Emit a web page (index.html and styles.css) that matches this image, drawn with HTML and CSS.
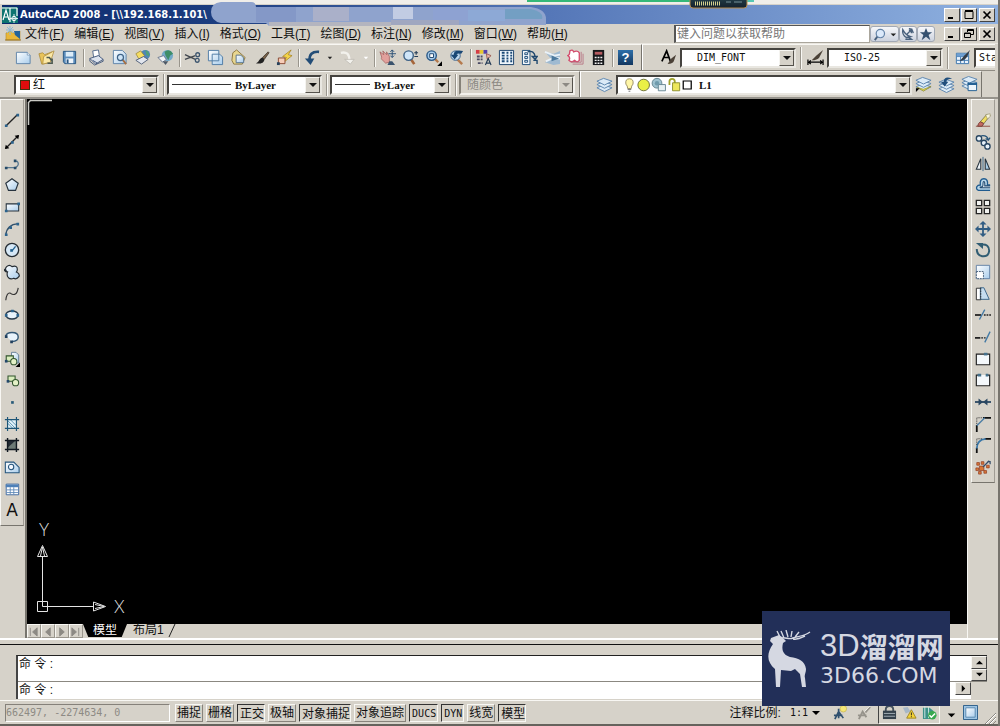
FILE: index.html
```html
<!DOCTYPE html>
<html lang="zh-CN">
<head>
<meta charset="utf-8">
<meta name="viewport" content="width=device-width, initial-scale=1">
<title>AutoCAD 2008</title>
<link rel="stylesheet" href="styles.css">
</head>
<body>
<svg class="defs" width="0" height="0" aria-hidden="true">
  <defs>
    <linearGradient id="sheet" x1="0" y1="0" x2="1" y2="1"><stop offset="0" stop-color="#fff"/><stop offset="1" stop-color="#a9cdec"/></linearGradient>
    <linearGradient id="chip" x1="0" y1="0" x2="0" y2="1"><stop offset="0" stop-color="#24404a"/><stop offset="1" stop-color="#14202c"/></linearGradient>
  </defs>
  <symbol id="min" viewBox="0 0 12 10"><path d="M2 8h5" stroke="#000" stroke-width="2"/></symbol>
  <symbol id="max" viewBox="0 0 12 10"><path d="M2 1.5h8v7H2z" fill="none" stroke="#000"/><path d="M2 1h8" stroke="#000" stroke-width="2"/></symbol>
  <symbol id="restore" viewBox="0 0 12 10"><path d="M4.500 3V.5h6v5H8M1.500 4h6v4.500h-6zM4 1.500h7M1 4.500h7" fill="none" stroke="#000"/></symbol>
  <symbol id="close" viewBox="0 0 12 10"><path d="M2.500 1.500l7 7m0-7l-7 7" stroke="#000" stroke-width="1.700"/></symbol>
  <symbol id="layers" viewBox="0 0 18 18"><g fill="#dcebf7" stroke="#5d86ae"><path d="M1 12.500l7-3 9 3-8 4z"/><path d="M1 9l7-3 9 3-8 4z"/><path d="M1 5.500l7-3 9 3-8 4z"/></g></symbol>
  <symbol id="brush" viewBox="0 0 18 18"><path d="M16 3l-6 6 2 2 5-7z" fill="#7a6248" stroke="#2d2823" stroke-width=".7"/><path d="M10 9c-4 1-3 5-7 6 4 1 9 0 9-4z" fill="#222"/></symbol>
  <symbol id="lens" viewBox="0 0 18 18"><path d="M9 10l4 6" stroke="#a5653a" stroke-width="2.800"/><circle cx="7" cy="7" r="5" fill="#cfe5f8" stroke="#3f6387" stroke-width="1.500"/></symbol>
</svg>

<div class="desktop-strip">
  <svg class="gadget" viewBox="0 0 230 9" aria-hidden="true">
    <path d="M0 0h163v2H0z" fill="#35b878"/><path d="M163 0h64v2h-64z" fill="#55c8b4"/>
    <rect x="163" y="-3" width="57" height="11" rx="3" fill="url(#chip)" stroke="#b58a4d"/>
    <path d="M168 3.500h26" stroke="#d4cf8e" stroke-width="4" stroke-dasharray="1 1"/>
    <path d="M199 2h5m3 0h8" stroke="#58717b" stroke-width="1.500"/>
  </svg>
</div>

<header class="titlebar">
  <svg class="app-icon" viewBox="0 0 16 16" aria-hidden="true"><path d="M0 0h16v16H0z" fill="#0e7470"/><path d="M1 13L4 3l3 10M2 10h4M8 15V1M0 1h15M15 1v8" stroke="#fff" stroke-width="1.200" fill="none"/><circle cx="12" cy="11.500" r="2.200" fill="none" stroke="#fff"/><path d="M12 7v9M8 11.500h8" stroke="#fff" stroke-width=".8"/></svg>
  <h1 class="title">AutoCAD 2008 - [\\192.168.1.101\</h1>
  <svg class="smudge" viewBox="0 0 338 26" aria-hidden="true">
    <path d="M2 11Q2 2 12 1h30q5 0 5 5h275q15 2 15 12v6H150v1H60l-3-3H12Q2 20 2 11z" fill="#8fa3cd"/>
    <path d="M47 6h40v15H47z" fill="#8498c7"/><path d="M104 6h36v14h-36z" fill="#aab0c9"/><path d="M184 6h20v12h-20z" fill="#c2cce3"/><path d="M224 8h35v12h-35z" fill="#8ea2d2"/><path d="M259 9h37v11h-37z" fill="#8da9d6"/><path d="M296 8h26q13 3 11 10h-37z" fill="#739fc3"/>
    <path d="M60 21h122v4H60z" fill="#b4b5bf"/><path d="M182 19h68v5h-68z" fill="#a0a7c0"/>
  </svg>
  <div class="window-buttons">
    <button class="win" aria-label="最小化"><svg><use href="#min"/></svg></button><button class="win" aria-label="最大化"><svg><use href="#max"/></svg></button><button class="win last" aria-label="关闭"><svg><use href="#close"/></svg></button>
  </div>
</header>

<nav class="menubar" aria-label="菜单">
  <svg class="doc-icon" viewBox="0 0 16 16" aria-hidden="true"><path d="M1 7l5-2 4 3 5-3v9H1z" fill="#e9b739" stroke="#b68a24" stroke-width=".6"/><path d="M9 5h6v8l-5-4z" fill="#23639a"/><path d="M5 0v9M1 4h8M2 1l6 6m0-6L2 7" stroke="#8fb9d6"/><path d="M0 14h16" stroke="#99762a"/></svg>
  <div class="menus">
    <button class="menu">文件(<u>F</u>)</button><button class="menu">编辑(<u>E</u>)</button><button class="menu">视图(<u>V</u>)</button><button class="menu">插入(<u>I</u>)</button><button class="menu">格式(<u>O</u>)</button><button class="menu">工具(<u>T</u>)</button><button class="menu">绘图(<u>D</u>)</button><button class="menu">标注(<u>N</u>)</button><button class="menu">修改(<u>M</u>)</button><button class="menu">窗口(<u>W</u>)</button><button class="menu">帮助(<u>H</u>)</button>
  </div>
  <div class="infocenter">
    <input class="search" type="text" placeholder="键入问题以获取帮助" aria-label="键入问题以获取帮助">
    <button class="info wide" aria-label="搜索"><svg viewBox="0 0 28 16"><path d="M6 10l-3 4" stroke="#48607c" stroke-width="2"/><circle cx="9" cy="7" r="4.500" fill="#dceafb" stroke="#6484a8" stroke-width="1.300"/><path d="M20 7h6l-3 3z" fill="#222"/></svg></button><button class="info" aria-label="通讯中心"><svg viewBox="0 0 16 16"><path d="M2 3q3 6 9 8l-5 1q-5-3-4-9zM7 8l6-6M9 2q4 0 5 5M9 4q3 0 3 3M8 11l4 3H5" fill="none" stroke="#49617d" stroke-width="1.500"/></svg></button><button class="info" aria-label="收藏夹"><svg viewBox="0 0 16 16"><path d="M8 1l2 5h5l-4 3 2 6-5-4-5 4 2-6-4-3h5z" fill="#35506f"/></svg></button>
  </div>
  <div class="window-buttons">
    <button class="win" aria-label="最小化文档"><svg><use href="#min"/></svg></button><button class="win" aria-label="还原文档"><svg><use href="#restore"/></svg></button><button class="win last" aria-label="关闭文档"><svg><use href="#close"/></svg></button>
  </div>
</nav>

<div class="toolrow first">
  <div class="toolbar standard" role="toolbar" aria-label="标准">
    <button class="tool" aria-label="新建"><svg viewBox="0 0 18 18"><path d="M1.500 3.500H13l3 3v9H1.500z" fill="url(#sheet)" stroke="#5e83a8"/><path d="M13 3.500v3h3" fill="#fff" stroke="#5e83a8" stroke-width=".7"/></svg></button>
    <button class="tool" aria-label="打开"><svg viewBox="0 0 18 18"><path d="M1 5l4-1 2 2 8-3-5 12-6 1z" fill="#e9c45a" stroke="#a88736" stroke-width=".8"/><path d="M6 8l11-6-4 12-8 2z" fill="#fbe8a6" stroke="#ad8c3c" stroke-width=".8"/><path d="M9 9h3l3 4m0-3v5h-5" fill="none" stroke="#4e5a50" stroke-width="1.600"/></svg></button>
    <button class="tool" aria-label="保存"><svg viewBox="0 0 18 18"><path d="M2.500 2.500h13v13H4l-1.500-2z" fill="#5b8dbc" stroke="#285681"/><path d="M5 3h8v5H5z" fill="#dcecf8"/><path d="M5 10h8v5H5z" fill="#eef4fa"/><path d="M6 11h2v4H6z" fill="#285681"/></svg></button>
    <i class="sep"></i>
    <button class="tool" aria-label="打印"><svg viewBox="0 0 18 18"><path d="M5 2l6-1 1 6-6 2z" fill="#fff" stroke="#546a8c"/><path d="M2 10l9-3 5 4-8 5z" fill="#dce3ee" stroke="#465a7d"/><path d="M2 10v3l5 4 9-4v-2M5 12l5 3" fill="none" stroke="#465a7d"/></svg></button>
    <button class="tool" aria-label="打印预览"><svg viewBox="0 0 18 18"><path d="M2.500 1.500H12l4 4v10H2.500z" fill="url(#sheet)" stroke="#5e83a8"/><path d="M12 11l4 5" stroke="#a66f43" stroke-width="2"/><circle cx="10" cy="9" r="3.200" fill="#cfe5f8" stroke="#3f6387" stroke-width="1.300"/></svg></button>
    <button class="tool" aria-label="发布"><svg viewBox="0 0 18 18"><circle cx="12" cy="6" r="5" fill="#4e86b6"/><path d="M12 1q5 2 4 7l-3-2z" fill="#50a17a"/><path d="M2 5l5-3 4 5-5 5z" fill="#f5dd63" stroke="#9c8635" stroke-width=".8"/><path d="M2 12l8-4 5 3-7 5z" fill="#e2e6ee" stroke="#53627a"/></svg></button>
    <button class="tool" aria-label="三维 DWF"><svg viewBox="0 0 18 18"><circle cx="11" cy="7" r="6" fill="#73a9c9"/><path d="M8 3q5-4 9 2l-3 2-2 5-3-5z" fill="#3e8e68"/><path d="M1 9l6-2 3 4-4 3z" fill="#f2f5f8" stroke="#65738a"/><path d="M6 13h6l-3 4z" fill="#4c5866"/></svg></button>
    <i class="sep"></i>
    <button class="tool" aria-label="剪切"><svg viewBox="0 0 18 18"><path d="M1 6l11 5M1 11l11-4" stroke="#41474e" stroke-width="1.400"/><circle cx="14.500" cy="6" r="2" fill="none" stroke="#3d566f" stroke-width="1.400"/><circle cx="14" cy="12" r="2" fill="none" stroke="#3d566f" stroke-width="1.400"/></svg></button>
    <button class="tool" aria-label="复制"><svg viewBox="0 0 18 18"><path d="M1.500 1.500h11v11h-11zM5.500 5.500h8l3 3v8h-11z" fill="url(#sheet)" stroke="#4f7ba5"/></svg></button>
    <button class="tool" aria-label="粘贴"><svg viewBox="0 0 18 18"><path d="M3 4l4-3 9 8-3 7H4l-2-4z" fill="#e8d690" stroke="#8d7840"/><path d="M6.500 6.500h5l3 3v5h-8z" fill="url(#sheet)" stroke="#56718d"/></svg></button>
    <button class="tool" aria-label="特性匹配"><svg><use href="#brush"/></svg></button>
    <button class="tool" aria-label="块编辑器"><svg viewBox="0 0 18 18"><path d="M16 1L7 8l4 1-4 6 10-8-4-1z" fill="#f4d448" stroke="#a57f20" stroke-width=".8"/><path d="M2.500 9.500h7v6h-7z" fill="#f6cdb8" stroke="#884832"/><path d="M1 14h3v3H1z" fill="#27425d"/></svg></button>
    <i class="sep"></i>
    <button class="tool" aria-label="放弃"><svg viewBox="0 0 18 18"><path d="M17 3Q6 2 7 13" fill="none" stroke="#234d77" stroke-width="2.800"/><path d="M2 10h10l-4 7z" fill="#234d77"/></svg></button>
    <button class="tool drop" aria-label="放弃列表"><svg viewBox="0 0 8 8"><path d="M2 3h5L4.500 6z" fill="#222"/></svg></button>
    <button class="tool" aria-label="重做" disabled><svg viewBox="0 0 18 18"><path d="M2 4q9-2 9 8" fill="none" stroke="#f2f1ec" stroke-width="2.500"/><path d="M6 11h10l-4 5z" fill="#f2f1ec" stroke="#b8b5ad" stroke-width=".7"/></svg></button>
    <button class="tool drop" aria-label="重做列表" disabled><svg viewBox="0 0 8 8"><path d="M2 3h5L4.500 6z" fill="#fff"/></svg></button>
    <i class="sep"></i>
    <button class="tool" aria-label="实时平移"><svg viewBox="0 0 18 18"><path d="M1 3l4 3-1-4 4 4V3l3 5v6l-4 1-5-5 1-1z" fill="#e1a09c" stroke="#9a5655" stroke-width=".7"/><path d="M14 1v8m-4-4h8M12 3l2-2 2 2m-4 4l2 2 2-2" fill="none" stroke="#284f75"/><path d="M9 17l2-4h3l3 4z" fill="#3b536d"/></svg></button>
    <button class="tool" aria-label="实时缩放"><svg viewBox="0 0 18 18"><use href="#lens" width="18" height="18"/><path d="M13 4h4m-2-2v4m-2 2h4" stroke="#243d58" stroke-width="1.200"/></svg></button>
    <button class="tool" aria-label="窗口缩放"><svg viewBox="0 0 18 18"><path d="M10 10l4 4" stroke="#b57a4d" stroke-width="2.500"/><circle cx="7" cy="7" r="5" fill="#a8cceb" stroke="#2b5a88" stroke-width="1.500"/><path d="M5 5h4v4H5z" fill="#fff" stroke="#1e456d"/><path d="M18 13v5h-5z"/></svg></button>
    <button class="tool" aria-label="缩放上一个"><svg viewBox="0 0 18 18"><path d="M10 11l5 5" stroke="#b57a4d" stroke-width="2.500"/><circle cx="8" cy="7" r="5" fill="#bfd8ed" stroke="#3a638d"/><path d="M16 2Q6 0 6 6H3l4 5 4-5H9q1-2 5-1z" fill="#194775"/></svg></button>
    <i class="sep"></i>
    <button class="tool" aria-label="特性"><svg viewBox="0 0 18 18"><path d="M1 1h4v4H1z" fill="#d43c46"/><path d="M5 1h4v4H5z" fill="#e7c72f"/><path d="M9 1h4v4H9z" fill="#5440ad"/><path d="M2 8h6M2 11h6M3 15h5" stroke="#4b4a63" stroke-width="2" stroke-dasharray="3 1"/><path d="M12 5l5 2-4 4z" fill="#e8b7a8" stroke="#9c5e53"/><path d="M11 17l3-7 3 7m-5-2h4" stroke="#223a56" fill="none" stroke-width="1.200"/></svg></button>
    <button class="tool" aria-label="设计中心"><svg viewBox="0 0 18 18"><path d="M1.500 1.500h15v15h-15z" fill="#eef5fb" stroke="#163f68"/><path d="M4 4h3m2 0h2m2 0h2M4 7h3m2 0h2m2 0h2M4 10h3m2 0h2m2 0h2M4 13h3m2 0h2m2 0h2" stroke="#1b4a77" stroke-width="2"/></svg></button>
    <button class="tool" aria-label="工具选项板"><svg viewBox="0 0 18 18"><path d="M1.500 1.500h8v15h-8z" fill="#f4f8fc" stroke="#1b4a77"/><path d="M4 4h3v2H4zm0 4h3v2H4zm0 4h3v2H4z" fill="none" stroke="#1b4a77"/><path d="M7 3q7-2 8 5m-3 0h5l-2 3zM13 12h4v4" fill="none" stroke="#20486e" stroke-width="1.500"/></svg></button>
    <button class="tool" aria-label="图纸集管理器"><svg viewBox="0 0 18 18"><path d="M1 3l9 2 7-3v14l-7 1-9-3 6-4z" fill="#9fbad1"/><path d="M1 3l10 4 6-1M2 13l9-4 6 1" stroke="#eaf2f8" stroke-width="2" fill="none"/><path d="M8 7l8 3-8 3" fill="#4b799e"/></svg></button>
    <button class="tool" aria-label="标记集管理器"><svg viewBox="0 0 18 18"><path d="M3 2q3-2 4 1 4-2 6 1v8q-2 3-5 0-3 3-6 0 2-3-1-5 2-1 2-5z" fill="#fff" stroke="#d34c6d" stroke-width="1.400"/><path d="M15 3v11H4M17 5v11H6" fill="none" stroke="#b87887"/></svg></button>
    <button class="tool" aria-label="快速计算器"><svg viewBox="0 0 18 18"><path d="M3 1h12v16H3z" fill="#16181b"/><path d="M5 3h8v3H5z" fill="#b65b60"/><path d="M5 9h2m1 0h2m1 0h2M5 12h2m1 0h2m1 0h2M5 15h2m1 0h2m1 0h2" stroke="#f2f2f2" stroke-width="1.500"/></svg></button>
    <i class="sep"></i>
    <button class="tool help" aria-label="帮助">?</button>
  </div>
  <div class="toolbar styles" role="toolbar" aria-label="样式">
    <button class="tool" aria-label="文字样式"><svg viewBox="0 0 18 18"><path d="M2 13L7 2l4 11M4 9h6" fill="none" stroke="#000" stroke-width="1.800"/><path d="M17 6l-5 4-4 6q6 0 7-4z" fill="#4b4137"/></svg></button>
    <div class="combo style-combo"><select class="mono indent" aria-label="文字样式"><option>DIM_FONT</option></select><span class="arrow"></span></div>
    <i class="sep tall"></i>
    <button class="tool" aria-label="标注样式"><svg viewBox="0 0 18 18"><path d="M1 11v6m16-6v6M2 14h14M4 12l-2 2 2 2m10-4l2 2-2 2" stroke="#000" fill="none" stroke-width="1.300"/><path d="M17 1l-7 6-5 5q6 0 8-3z" fill="#4b4137"/></svg></button>
    <div class="combo style-combo"><select class="mono indent" aria-label="标注样式"><option>ISO-25</option></select><span class="arrow"></span></div>
    <i class="sep tall"></i>
    <button class="tool" aria-label="表格样式"><svg viewBox="0 0 18 18"><path d="M2.500 4.500h13v11h-13zM3 8h12M3 12h12M7 5v10m4-10v10" fill="#eaf3fd" stroke="#3974ac"/><path d="M3 5h12v3H3z" fill="#6e9fd2"/><path d="M17 1l-6 6-5 6q6-1 8-5z" fill="#333c46"/></svg></button>
    <div class="combo table-combo"><select class="mono" aria-label="表格样式"><option>Standard</option></select><span class="arrow"></span></div>
  </div>
</div>

<div class="toolrow second">
  <div class="toolbar props" role="toolbar" aria-label="特性">
    <div class="combo color"><span class="red"></span><select aria-label="颜色"><option>红</option></select><span class="arrow"></span></div>
    <i class="sep tall"></i>
    <div class="combo linetype"><span class="line long"></span><select class="serif" aria-label="线型"><option>ByLayer</option></select><span class="arrow"></span></div>
    <i class="sep tall"></i>
    <div class="combo weight"><span class="line"></span><select class="serif" aria-label="线宽"><option>ByLayer</option></select><span class="arrow"></span></div>
    <i class="sep tall"></i>
    <div class="combo plot off"><select aria-label="打印样式" disabled><option>随颜色</option></select><span class="arrow"></span></div>
  </div>
  <div class="toolbar layer" role="toolbar" aria-label="图层">
    <button class="tool" aria-label="图层特性管理器"><svg><use href="#layers"/></svg></button>
    <div class="combo layer-combo">
      <svg class="states" viewBox="0 0 78 18" aria-hidden="true"><path d="M6 13q0-3-2-5-1-6 4-6t4 6q-2 2-2 5z" fill="#fff6a8" stroke="#92865b"/><path d="M6 14h4m-3 2h2" stroke="#666"/><circle cx="24" cy="9" r="6.500" fill="#eaf046" stroke="#63682f"/><circle cx="39" cy="7" r="5.500" fill="#9fc2cf" stroke="#60818d"/><path d="M40.500 8.500h8v7h-8z" fill="#e7f1f3" stroke="#60818d"/><circle cx="39" cy="7" r="2.500" fill="#709bac"/><path d="M53 9V5q0-3 3-3t3 3v4" fill="none" stroke="#a1a32c" stroke-width="2"/><path d="M56.500 6.500h8v9h-8z" fill="#eee75c" stroke="#858929"/><path d="M68.500 4.500h9v9h-9z" fill="#fff" stroke="#000" stroke-width="1.400"/></svg>
      <select class="serif" aria-label="图层"><option>L1</option></select><span class="arrow"></span>
    </div>
    <button class="tool" aria-label="置为当前图层"><svg viewBox="0 0 18 18"><use href="#layers" y="-1" width="18" height="18"/><path d="M2 12l7 2 8-3-8 5z" fill="#e6d94a" stroke="#9a912e" stroke-width=".7"/><path d="M1 17v-4h4z"/></svg></button>
    <button class="tool" aria-label="上一个图层"><svg viewBox="0 0 18 18"><use href="#layers" y="1" width="18" height="18"/><path d="M15 3Q7-1 6 6H3l4 5 4-5H9q0-3 6-3z" fill="#214f7d"/></svg></button>
    <button class="tool" aria-label="图层状态"><svg viewBox="0 0 18 18"><use href="#layers" y="-2" width="18" height="18"/><path d="M7.500 7.500h9v8h-9z" fill="#eef5fb" stroke="#1e5c91"/><path d="M7 8.500h10" stroke="#1e5c91" stroke-width="2"/></svg></button>
  </div>
</div>

<main class="workspace">
  <div class="side left">
    <div class="sidebar" role="toolbar" aria-label="绘图">
      <button class="side-tool" aria-label="直线"><svg viewBox="0 0 18 18"><path d="M3 15L15 3" stroke="#222" stroke-width="1.500"/><path d="M1 14h3v3H1zM14 2h3v3h-3z" fill="#2b638d"/></svg></button>
      <button class="side-tool" aria-label="构造线"><svg viewBox="0 0 18 18"><path d="M2 16L16 2" stroke="#222" stroke-width="1.500"/><path d="M1 17l1-5 4 4zM17 1l-5 1 4 4z"/><path d="M8 8h3v3H8z" fill="#2b638d"/></svg></button>
      <button class="side-tool" aria-label="多段线"><svg viewBox="0 0 18 18"><path d="M2 13h11q5-3 2-7h-3" fill="none" stroke="#597991" stroke-width="1.500"/><path d="M1 12h3v3H1zm10 0h3v3h-3zm0-8h3v3h-3z" fill="#244a68"/></svg></button>
      <button class="side-tool" aria-label="正多边形"><svg viewBox="0 0 18 18"><path d="M9 2l7 5-3 8H5L2 7z" fill="url(#sheet)" stroke="#26333e" stroke-width="1.300"/></svg></button>
      <button class="side-tool" aria-label="矩形"><svg viewBox="0 0 18 18"><path d="M2.500 5.500h14v8h-14z" fill="url(#sheet)" stroke="#26333e" stroke-width="1.200"/><path d="M1 12h3v3H1zM15 4h3v3h-3z" fill="#2b638d"/></svg></button>
      <button class="side-tool" aria-label="圆弧"><svg viewBox="0 0 18 18"><path d="M2 16Q3 4 16 3" fill="none" stroke="#31516c" stroke-width="1.500"/><path d="M1 14h3v3H1zM6 6h3v3H6zm8-4h3v3h-3z" fill="#2b638d"/></svg></button>
      <button class="side-tool" aria-label="圆"><svg viewBox="0 0 18 18"><circle cx="9" cy="9" r="7.500" fill="#d6e8f6" stroke="#242c33" stroke-width="1.500"/><path d="M9 10l4-5" stroke="#23618e" stroke-width="1.500"/><path d="M7 8h3v3H7z" fill="#23618e"/></svg></button>
      <button class="side-tool" aria-label="修订云线"><svg viewBox="0 0 18 18"><path d="M4 9Q0 6 3 3q3-3 6 0 6-2 6 3 0 2-1 3 4 2 3 5-3 4-6 2-5 2-7-2-1-3 0-5-3 0-4-3z" fill="url(#sheet)" stroke="#242c33" stroke-width="1.300"/></svg></button>
      <button class="side-tool" aria-label="样条曲线"><svg viewBox="0 0 18 18"><path d="M2 16Q3 7 7 8q7 5 9-6" fill="none" stroke="#333" stroke-width="1.300"/></svg></button>
      <button class="side-tool" aria-label="椭圆"><svg viewBox="0 0 18 18"><ellipse cx="9" cy="9" rx="7" ry="4.500" fill="#e8f3fb" stroke="#26394a" stroke-width="1.500"/><path d="M1 8h3v3H1zm7-5h3v3H8zm6 5h3v3h-3z" fill="#2b638d"/></svg></button>
      <button class="side-tool" aria-label="椭圆弧"><svg viewBox="0 0 18 18"><path d="M2 8q1-4 7-4 7 0 7 5t-7 5" fill="#e8f3fb" stroke="#345875" stroke-width="1.600"/><path d="M1 7h3v3H1zm6 6h3v3H7z" fill="#203f5d"/></svg></button>
      <button class="side-tool" aria-label="插入块"><svg viewBox="0 0 18 18"><path d="M8.500 1.500h5l3 3v9h-8z" fill="url(#sheet)" stroke="#5b7891"/><path d="M2.500 5.500h8v6h-8z" fill="#d9edbd" stroke="#31542d" stroke-width="1.200"/><circle cx="11" cy="12" r="3.500" fill="#e4f1c7" stroke="#31542d" stroke-width="1.200"/><path d="M1 10h3v3H1z" fill="#23486a"/><path d="M18 13v5h-5z"/></svg></button>
      <button class="side-tool" aria-label="创建块"><svg viewBox="0 0 18 18"><path d="M4.500 4.500h8v6h-8z" fill="#d9edbd" stroke="#31542d" stroke-width="1.200"/><circle cx="13" cy="12" r="3.500" fill="#e4f1c7" stroke="#31542d" stroke-width="1.200"/><path d="M3 9h3v3H3z" fill="#23486a"/></svg></button>
      <button class="side-tool" aria-label="点"><svg viewBox="0 0 18 18"><path d="M8 8h3v3H8z" fill="#275a78"/></svg></button>
      <button class="side-tool" aria-label="图案填充"><svg viewBox="0 0 18 18"><path d="M4 4h10v10H4z" fill="#e5f3fa"/><path d="M4 8l6 6M4 5l9 9M7 4l7 7" stroke="#4d8cad"/><path d="M1 4h16M1 14h16M4 1v16M14 1v16" stroke="#1d5577" stroke-width="1.300"/></svg></button>
      <button class="side-tool" aria-label="渐变色"><svg viewBox="0 0 18 18"><path d="M4 4h10v10H4z" fill="#6c7a75"/><path d="M4 4h9L4 12z" fill="#232b34"/><path d="M1 4h16M1 14h16M4 1v16M14 1v16" stroke="#101820" stroke-width="1.600"/></svg></button>
      <button class="side-tool" aria-label="面域"><svg viewBox="0 0 18 18"><path d="M1.500 3.500H11l6 6v6H1.500z" fill="url(#sheet)" stroke="#25557d" stroke-width="1.200"/><circle cx="8" cy="9" r="3" fill="#f4f9ff" stroke="#25557d" stroke-width="1.200"/></svg></button>
      <button class="side-tool" aria-label="表格"><svg viewBox="0 0 18 18"><path d="M2.500 3.500h14v12h-14z" fill="#fff" stroke="#315f9b"/><path d="M2 4h14v3H2z" fill="#4d80b8"/><path d="M3 10h13M3 13h13M7 7v8m4-8v8" stroke="#5c88b8"/></svg></button>
      <button class="side-tool letter" aria-label="多行文字">A</button>
    </div>
  </div>

  <div class="drawing">
    <div class="canvas">
      <svg class="corner" viewBox="0 0 26 27" aria-hidden="true"><path d="M3 1.500h22M1.500 4v22M1 4l3-3" stroke="#c9c9c4" stroke-width="1.500" fill="none"/></svg>
      <svg class="ucs" viewBox="0 0 95 96" aria-label="UCS 坐标"><g fill="none" stroke="#e4e4e4"><path d="M2.500 78.500h10v10h-10zM7.500 83.500V34M7.500 83.500H58M2.500 33.500h10l-5-11zM5.500 33l2-9 2 9M58.500 79v9l12-4.500zM60 81.500l9 2-9 2"/></g><text class="axis" x="4" y="13">Y</text><text class="axis" x="79" y="90">X</text></svg>
    </div>
    <div class="tabs">
      <button class="nav" aria-label="第一个"><svg viewBox="0 0 12 12"><path d="M2.500 2v9M10 2v9L5 6.500z"/></svg></button><button class="nav" aria-label="上一个"><svg viewBox="0 0 12 12"><path d="M9 2v9L4 6.500z"/></svg></button><button class="nav" aria-label="下一个"><svg viewBox="0 0 12 12"><path d="M4 2v9l5-4.500z"/></svg></button><button class="nav" aria-label="最后一个"><svg viewBox="0 0 12 12"><path d="M2 2v9l5-4.500zM9.500 2v9"/></svg></button>
      <button class="tab active">模型</button><button class="tab">布局1</button><svg class="slash" viewBox="0 0 8 13" aria-hidden="true"><path d="M7 0L1 13" stroke="#222"/></svg>
    </div>
  </div>

  <div class="side right">
    <div class="sidebar" role="toolbar" aria-label="修改">
      <button class="side-tool" aria-label="删除"><svg viewBox="0 0 18 18"><path d="M1 16h16" stroke="#8b4336"/><path d="M6 11l7-8 4 1-7 9z" fill="#f0de62" stroke="#665f37" stroke-width=".8"/><path d="M12 3l5-1v3l-3 3z" fill="#f8f5dd" stroke="#888459" stroke-width=".6"/><path d="M6 11l4 2-2 3H3l1-3z" fill="#c46a60" stroke="#743f39"/></svg></button>
      <button class="side-tool" aria-label="复制对象"><svg viewBox="0 0 18 18"><circle cx="4.500" cy="5" r="3" fill="#e8f2fa" stroke="#294661" stroke-width="1.500"/><circle cx="10" cy="10" r="3" fill="#e8f2fa" stroke="#294661" stroke-width="1.500"/><circle cx="14" cy="14" r="3" fill="#e8f2fa" stroke="#294661" stroke-width="1.500"/><path d="M7 2q7-1 8 5M12 5l3 2 2-3" fill="none" stroke="#28557a" stroke-width="1.400"/></svg></button>
      <button class="side-tool" aria-label="镜像"><svg viewBox="0 0 18 18"><path d="M6.500 3v12h-5z" fill="#eef4f8" stroke="#26333e" stroke-width="1.200"/><path d="M11.500 3v12h5z" fill="#a9cce5" stroke="#26333e" stroke-width="1.200"/><path d="M9 1v16" stroke="#2b5b81"/></svg></button>
      <button class="side-tool" aria-label="偏移"><svg viewBox="0 0 18 18"><path d="M17 15H4q-3-1-2-4 1-2 4-2-1-7 4-7t4 7h3" fill="#b9d7ea" stroke="#205b8e" stroke-width="1.500"/><path d="M17 12H6q-1-1 2-1 1 0 1-3t1-3 1 3v2h6" fill="#eef4f8" stroke="#224a70" stroke-width="1.200"/></svg></button>
      <button class="side-tool" aria-label="阵列"><svg viewBox="0 0 18 18"><path d="M1.500 1.500h6v6h-6zM10.500 1.500h6v6h-6zM1.500 10.500h6v6h-6zM10.500 10.500h6v6h-6z" fill="#f1f2ef" stroke="#262626" stroke-width="1.500"/></svg></button>
      <button class="side-tool" aria-label="移动"><svg viewBox="0 0 18 18"><path d="M9 3v12M3 9h12" stroke="#315d83" stroke-width="2"/><path d="M9 0l4 4H5zM9 18l4-4H5zM0 9l4-4v8zM18 9l-4-4v8z" fill="#315d83"/></svg></button>
      <button class="side-tool" aria-label="旋转"><svg viewBox="0 0 18 18"><path d="M7 3q9-1 9 7-1 7-8 6-6-1-6-8" fill="none" stroke="#315d73" stroke-width="2.200"/><path d="M1 1h8v7z" fill="#315d73"/></svg></button>
      <button class="side-tool" aria-label="缩放"><svg viewBox="0 0 18 18"><path d="M1.500 1.500h15v15h-15z" fill="url(#sheet)" stroke="#5b7ca3"/><path d="M1.500 8.500h8v8h-8z" fill="#fff" stroke="#37516d" stroke-dasharray="2 1"/></svg></button>
      <button class="side-tool" aria-label="拉伸"><svg viewBox="0 0 18 18"><path d="M1.500 2.500h5v13h-5z" fill="#fff" stroke="#222"/><path d="M6 2h4l6 13H6z" fill="#c6ddef" stroke="#315d83"/><path d="M6.500 2v13" stroke="#222" stroke-dasharray="2 1"/></svg></button>
      <button class="side-tool" aria-label="修剪"><svg viewBox="0 0 18 18"><path d="M0 9h7" stroke="#222" stroke-width="2"/><path d="M10 9h8" stroke="#222" stroke-width="1.500" stroke-dasharray="2 1"/><path d="M5 14l6-11" stroke="#4279a5" stroke-width="1.500"/></svg></button>
      <button class="side-tool" aria-label="延伸"><svg viewBox="0 0 18 18"><path d="M0 10h6" stroke="#222" stroke-width="2"/><path d="M7 10h6" stroke="#222" stroke-width="1.500" stroke-dasharray="2 1"/><path d="M11 15l6-12" stroke="#4279a5" stroke-width="1.500"/></svg></button>
      <button class="side-tool" aria-label="打断于点"><svg viewBox="0 0 18 18"><path d="M1.500 3.500h15v12h-15z" fill="#f4f8fb" stroke="#222" stroke-width="1.300"/><path d="M10 2h4v3h-4z" fill="#45718c"/></svg></button>
      <button class="side-tool" aria-label="打断"><svg viewBox="0 0 18 18"><path d="M4 3.500H1.500v12h15v-12H14" fill="#f4f8fb" stroke="#222" stroke-width="1.300"/><path d="M3 2h4v3H3zm9 0h3v3h-3z" fill="#45718c"/></svg></button>
      <button class="side-tool" aria-label="合并"><svg viewBox="0 0 18 18"><path d="M0 9h18" stroke="#294661" stroke-width="2"/><path d="M4 5l5 4-5 4zM14 5L9 9l5 4z" fill="#294661"/></svg></button>
      <button class="side-tool" aria-label="倒角"><svg viewBox="0 0 18 18"><path d="M2 18v-8M9 2h9" stroke="#111" stroke-width="2"/><path d="M2 11l9-9" stroke="#4b7da4" stroke-width="1.500"/><path d="M2 9V2h7" fill="none" stroke="#222" stroke-dasharray="1 1"/></svg></button>
      <button class="side-tool" aria-label="圆角"><svg viewBox="0 0 18 18"><path d="M2 18v-6M11 2h7" stroke="#111" stroke-width="2"/><path d="M2 13Q2 3 12 2" fill="none" stroke="#3b78a8" stroke-width="2"/><path d="M2 9V2h7" fill="none" stroke="#222" stroke-dasharray="1 1"/></svg></button>
      <button class="side-tool" aria-label="分解"><svg viewBox="0 0 18 18"><path d="M2 4h3v3H2zm5-1h3v3H7zM1 10h3v3H1zm4-2h5v5H5zm-1 6h3v3H4zm6-1h3v3h-3zm3-6h3v3h-3z" fill="#d97836" stroke="#933e24" stroke-width=".8"/><path d="M9 9l7-7m-2 1h3v3" fill="none" stroke="#354d69" stroke-width="1.400"/></svg></button>
    </div>
  </div>
</main>

<section class="command" aria-label="命令行">
  <div class="command-box">
    <div class="history"><output>命 令 :</output><div class="scroll"><button class="scroll-btn" aria-label="向上滚动"><svg viewBox="0 0 8 8"><path d="M0 6h8L4 2z"/></svg></button><button class="scroll-btn" aria-label="向下滚动"><svg viewBox="0 0 8 8"><path d="M0 2h8L4 6z"/></svg></button></div></div>
    <div class="prompt"><label for="cmd">命 令 :</label><input id="cmd" class="prompt-input" type="text"><button class="scroll-btn" aria-label="向右滚动"><svg viewBox="0 0 8 8"><path d="M2 0v8l4-4z"/></svg></button></div>
  </div>
</section>

<footer class="status">
  <div class="coords">662497, -2274634, 0</div>
  <div class="modes">
    <button class="mode">捕捉</button><button class="mode">栅格</button><button class="mode on" aria-pressed="true">正交</button><button class="mode">极轴</button><button class="mode on" aria-pressed="true">对象捕捉</button><button class="mode">对象追踪</button><button class="mode on mono" aria-pressed="true">DUCS</button><button class="mode on mono" aria-pressed="true">DYN</button><button class="mode">线宽</button><button class="mode on" aria-pressed="true">模型</button>
  </div>
  <div class="scale"><span>注释比例:</span><button class="scale-btn mono">1:1<svg viewBox="0 0 8 8" aria-hidden="true"><path d="M0 2h8L4 6z"/></svg></button></div>
  <div class="tray">
    <button class="tray-btn" aria-label="注释可见性"><svg viewBox="0 0 16 16"><circle cx="11" cy="4" r="3.500" fill="#f4e678" stroke="#bca944" stroke-width=".6"/><path d="M6 4v10M2 15l4-8 5 7M1 11h9" stroke="#30516f" stroke-width="1.800" fill="none"/></svg></button>
    <button class="tray-btn" aria-label="自动比例"><svg viewBox="0 0 16 16"><path d="M2 15l4-8 4 6M9 8l5-6M1 11h9" stroke="#96938b" stroke-width="2" fill="none"/><path d="M8 7l6-6" stroke="#f2f1ec"/></svg></button>
    <div class="well">
      <button class="tray-btn" aria-label="锁定"><svg viewBox="0 0 16 16"><path d="M4 7V5q0-4 4-4t4 4v2" fill="none" stroke="#46525e" stroke-width="2"/><path d="M1 6h14v9H1z" fill="#34414c"/><path d="M2 9h12M2 12h12" stroke="#a4afb8"/></svg></button>
      <button class="tray-btn" aria-label="警告"><svg viewBox="0 0 16 16"><path d="M1 3l5-1 3 5-5 2z" fill="#a6b7c7"/><path d="M10 5l5 9H5z" fill="#f5d335" stroke="#9e8524"/><path d="M10 8v3m0 1v1" stroke="#222"/></svg></button>
      <button class="tray-btn" aria-label="发布完成"><svg viewBox="0 0 16 16"><path d="M1 3h7l4 3v9H1z" fill="#3c9188"/><path d="M3 1v13M7 2v12" stroke="#d6e8ea"/><circle cx="11" cy="11" r="4.500" fill="#38a84f"/><path d="M8 11l2 2 4-4" stroke="#fff" stroke-width="1.600" fill="none"/></svg></button>
    </div>
    <button class="tray-btn narrow" aria-label="托盘设置"><svg viewBox="0 0 16 16"><path d="M4 9h8l-4 4z"/></svg></button>
    <button class="tray-btn" aria-label="全屏显示"><svg viewBox="0 0 16 16"><path d="M.5.5h15v15H.500z" fill="#9fc6e5" stroke="#285b86"/><path d="M3 3h10v10H3z" fill="url(#sheet)" stroke="#5786ad"/></svg></button>
    <svg class="grip" viewBox="0 0 12 12" aria-hidden="true"><path d="M1 12L12 1M5 12l7-7M9 12l3-3" stroke="#8b8983"/><path d="M2 12L12 2M6 12l6-6" stroke="#fff"/></svg>
  </div>
</footer>

<aside class="watermark" aria-label="3D溜溜网">
  <svg class="deer" viewBox="0 0 44 58" aria-hidden="true"><path d="M3 8l8-3 3 2 4 4-3 2c-2 8 1 12 7 14 9 1 15 4 16 12 0 4-2 6-1 9l1 9h-4l-2-13-5-5-4 2-10-1-1 17H8l-1-18C-1 32-2 24 5 14L2 11z" fill="#d5d8e2"/><path d="M12 7L9 1M13 8c5-1 8 2 12 0s10-1 17-6M16 8l-3-7M20 7l-2-7M23 7l1-6M27 7l4-5M25 9c5 1 8-1 12-3" fill="none" stroke="#d5d8e2" stroke-width="1.400"/></svg>
  <div class="brand"><div class="brand-name"><span class="brand-3d">3D</span>溜溜网</div><div class="brand-url">3D66.COM</div></div>
</aside>
</body>
</html>
```
FILE: styles.css
```css
* { box-sizing: border-box; }

body {
  margin: 0;
  min-height: 100vh;
  display: flex;
  flex-direction: column;
  position: relative;
  overflow-x: hidden;
  background: #d6d2c9;
  border-right: 2px solid #77746d;
  color: #111;
  font: 12px/16px "Liberation Sans", "Noto Sans CJK SC", sans-serif;
}

button, input, select { font: inherit; color: inherit; margin: 0; padding: 0; border: 0; background: none; border-radius: 0; }
svg { display: block; flex: none; }
.defs { position: absolute; }
.mono { font-family: "DejaVu Sans Mono", "Noto Sans CJK SC", monospace; font-size: 10px; }
.combo .serif { font-family: "Liberation Serif", "Noto Sans CJK SC", serif; font-size: 11px; font-weight: 700; }

/* Title bar */
.desktop-strip { height: 5px; background: #f0eee9; border-bottom: 1px solid #d6d2c9; }
.gadget { position: absolute; z-index: 2; left: 527px; top: 0; width: 230px; height: 9px; }
.titlebar {
  display: flex; align-items: center; height: 19px; margin-left: 2px; padding-right: 3px; position: relative;
  background: linear-gradient(90deg, #0c2a6c 0%, #1c3d80 22%, #5577b8 55%, #8fb1e0 100%);
}
.app-icon { width: 16px; height: 16px; }
.title { margin: 0 0 0 2px; color: #fff; font: 700 11px/16px "DejaVu Sans Condensed", "DejaVu Sans", sans-serif; }
.smudge { position: absolute; z-index: 1; left: 207px; top: -4px; width: 338px; height: 26px; }
.window-buttons { display: flex; gap: 1px; margin-left: auto; }
.win {
  width: 16px; height: 14px; display: grid; place-items: center; background: #d6d2c9;
  border: 1px solid; border-color: #fff #444 #444 #fff;
}
.win.last { margin-left: 1px; }
.win svg { width: 12px; height: 10px; }

/* Menu bar */
.menubar { display: flex; align-items: center; height: 20px; padding: 0 3px 0 5px; border-bottom: 1px solid #e9e6df; }
.doc-icon { width: 16px; height: 16px; }
.menus { display: flex; gap: 10px; margin-left: 4px; }
.menu { font-size: 12px; white-space: nowrap; }
.infocenter { display: flex; align-items: center; margin-left: auto; margin-right: 9px; }
.search { width: 196px; height: 18px; padding: 0 1px; background: #fff; border: 1px solid #aaa69c; border-left: 2px solid #555; border-top-color: #555; }
.search::placeholder { color: #777; opacity: 1; }
.info { display: grid; place-items: center; width: 18px; height: 16px; border: 1px solid #a2a9b5; border-radius: 3px; background: linear-gradient(#f6f7fa, #cdd3df); }
.info.wide { width: 29px; }
.info svg { width: 14px; height: 14px; }
.info.wide svg { width: 26px; height: 15px; }
.menubar .window-buttons { margin-left: 0; }

/* Toolbars */
.toolrow { display: flex; height: 27px; overflow: hidden; border-bottom: 1px solid #8f8b83; }
.toolrow.first { margin-right: 3px; }
.toolrow.second { height: 28px; border-bottom: 2px solid #96938c; }
.toolbar { display: flex; align-items: center; border-top: 1px solid #f8f7f3; }
.standard { padding: 0 4px 0 12px; border-right: 1px solid #77746d; }
.styles { padding-left: 14px; border-left: 1px solid #fff; flex: 1; min-width: 0; }
.tool { width: 23px; height: 22px; display: grid; place-items: center; flex: none; }
.tool svg { width: 17px; height: 17px; }
.tool.drop { width: 13px; }
.tool.drop svg { width: 7px; height: 7px; }
.tool.help { width: 15px; height: 15px; margin: 0 4px; background: linear-gradient(#2d6fa9, #12365f); color: #fff; font: 700 13px/15px "Liberation Sans", sans-serif; }
.sep { flex: none; width: 4px; height: 18px; border-right: 1px solid #f9f8f4; background: linear-gradient(90deg, transparent 2px, #99958c 2px); }
.sep.tall { height: 22px; margin: 0 2px; }
.combo {
  display: flex; align-items: stretch; height: 20px; flex: none; background: #fff;
  border: 2px solid; border-color: #45433f #e9e7e1 #e9e7e1 #45433f;
}
.combo select { appearance: none; flex: 1; min-width: 0; padding-left: 3px; outline: 0; opacity: 1; }
.combo select.indent { padding-left: 15px; }
.arrow { flex: none; width: 15px; display: grid; place-items: center; background: #d6d2c9; border: 1px solid; border-color: #f5f4f0 #55524c #55524c #f5f4f0; }
.arrow::after { content: ""; border: 4px solid transparent; border-top-color: #111; border-bottom: 0; }
.style-combo { width: 116px; }
.table-combo { width: 116px; }
.props { padding-left: 14px; padding-right: 4px; border-right: 1px solid #77746d; }
.color { width: 145px; }
.red { width: 10px; height: 10px; margin: 3px 0 0 4px; background: #e00d0d; border: 1px solid #431; }
.linetype { width: 155px; }
.line { width: 35px; margin: 0 1px 0 3px; background: linear-gradient(#333, #333) center / 100% 1px no-repeat; }
.line.long { width: 59px; }
.weight { width: 121px; }
.plot { width: 116px; }
.off { background: #d6d2c9; border-color: #858178 #f2f0eb #f2f0eb #858178; color: #8d8a84; }
.off select { padding-left: 6px; color: #8d8a84; }
.off .arrow::after { border-top-color: #8d8a84; }
.layer { flex: 1; padding-left: 12px; border-left: 1px solid #fff; border-right: 1px solid #77746d; margin-right: 16px; }
.layer-combo { flex: 1; }
.states { width: 78px; height: 16px; }

/* Drawing area */
.workspace { display: flex; flex: 1; }
.side { flex: none; }
.side.left { width: 27px; padding-right: 1px; border-right: 2px solid #77746d; }
.side.right { width: 31px; padding: 0 3px 0 3px; border-left: 1px solid #f8f7f3; }
.sidebar { padding-top: 9px; padding-bottom: 4px; border: 1px solid; border-color: #f8f7f3 #a09c94 #77746d #f8f7f3; }
.side-tool { display: grid; place-items: center; width: 100%; height: 22px; }
.side-tool:nth-child(3n) { height: 21px; }
.side-tool svg { width: 16px; height: 16px; }
.letter { font: 17px/20px "DejaVu Sans", sans-serif; }
.drawing { flex: 1; min-width: 0; display: flex; flex-direction: column; }
.canvas { flex: 1; background: #000; display: flex; flex-direction: column; justify-content: space-between; padding-bottom: 5px; }
.corner { width: 26px; height: 27px; }
.ucs { width: 95px; height: 96px; margin-left: 8px; overflow: visible; }
.axis { fill: #e4e4e4; font: 300 17px Lato, "Liberation Sans", sans-serif; }
.tabs { display: flex; height: 14px; }
.nav { width: 14px; border: 1px solid; border-color: #f8f7f3 #99958c #99958c #f8f7f3; }
.nav svg { width: 11px; height: 11px; fill: #8d8a84; stroke: #8d8a84; }
.tab { height: 13px; line-height: 13px; padding: 0 4px 0 6px; white-space: nowrap; }
.tab.active { width: 44px; padding: 0; background: #000; color: #fff; clip-path: polygon(0 0, 100% 0, 88% 100%, 12% 100%); }
.slash { width: 8px; height: 13px; }

/* Command line */
.command { height: 62px; border-top: 2px solid #fff; padding: 4px 11px 0 16px; background: linear-gradient(#111, #111) 0 4px / 100% 1px no-repeat; }
.command-box { margin-top: 11px; border-top: 1px solid #222; border-left: 2px solid #444; }
.history { display: flex; justify-content: space-between; height: 26px; background: #fff; border-bottom: 1px solid #8b8881; }
.history output, .prompt label { padding-left: 1px; line-height: 16px; }
.scroll { display: flex; flex-direction: column; width: 16px; }
.scroll-btn { width: 16px; height: 13px; display: grid; place-items: center; background: #d6d2c9; border: 1px solid; border-color: #f8f7f3 #444 #444 #f8f7f3; }
.scroll-btn svg { width: 7px; height: 7px; }
.prompt { display: flex; height: 17px; margin-right: 16px; background: #fff; }
.prompt-input { flex: 1; min-width: 0; outline: 0; }

/* Status bar */
.status { display: flex; align-items: center; height: 26px; padding: 0 2px 0 5px; border-top: 1px solid #f8f7f3; border-bottom: 2px solid #66635d; }
.coords { width: 165px; height: 18px; line-height: 16px; color: #8d8a84; border: 1px solid; border-color: #85817a #fff #fff #85817a; white-space: nowrap; font-family: "DejaVu Sans Mono", monospace; font-size: 10px; }
.modes { display: flex; gap: 3px; margin-left: 5px; }
.mode { height: 18px; padding: 0 1px; line-height: 16px; white-space: nowrap; border: 1px solid; border-color: #f8f7f3 #88847c #88847c #f8f7f3; }
.mode.on { padding: 1px 0 0 2px; border-color: #333 #f8f7f3 #f8f7f3 #333; }
.mode.on.mono { padding-right: 1px; }
.scale { display: flex; align-items: center; gap: 9px; margin-left: auto; white-space: nowrap; }
.scale-btn { display: flex; align-items: center; gap: 4px; }
.scale-btn svg { width: 8px; height: 8px; }
.tray { display: flex; align-items: center; gap: 4px; margin-left: 10px; }
.tray-btn { width: 20px; height: 20px; display: grid; place-items: center; }
.tray-btn svg { width: 15px; height: 15px; }
.tray-btn.narrow { width: 12px; }
.well { display: flex; border: 1px solid; border-color: #444 #f8f7f3 #f8f7f3 #444; }
.grip { width: 12px; height: 12px; align-self: flex-end; }

/* Brand badge over the lower right corner */
.watermark { position: absolute; right: 48px; bottom: 20px; width: 188px; height: 95px; display: flex; align-items: center; padding: 0 6px; gap: 8px; background: #222f58; color: #d5d8e2; }
.deer { width: 44px; height: 58px; }
.brand { display: flex; flex-direction: column; gap: 4px; white-space: nowrap; }
.brand-name { display: flex; align-items: center; height: 30px; font: 700 28px/30px "Noto Sans CJK SC", sans-serif; }
.brand-3d { font: 400 31px/30px "Liberation Sans", sans-serif; }
.brand-url { font: 400 22px/22px "DejaVu Sans", sans-serif; }
```
